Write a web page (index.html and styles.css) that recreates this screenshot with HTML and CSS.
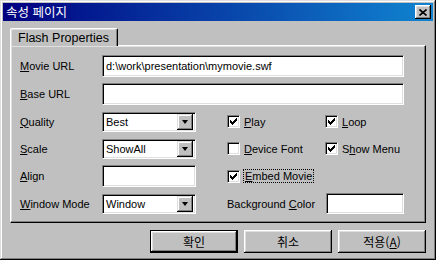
FILE: index.html
```html
<!DOCTYPE html>
<html lang="ko">
<head>
<meta charset="UTF-8" />
<title>속성 페이지</title>
<link rel="stylesheet" href="styles.css">
</head>
<body>

<div class="window">
  <div class="titlebar">
    <span class="title">속성 페이지</span>
    <button class="close-btn" type="button">
      <svg width="8" height="7" viewBox="0 0 8 7"><path d="M0.5 0.5L7.5 6.5M7.5 0.5L0.5 6.5" stroke="#000" stroke-width="1.6" fill="none"/></svg>
    </button>
  </div>

  <div class="content">
    <div class="tabs">
      <div class="tab">Flash Properties</div>
    </div>

    <div class="panel">
      <label class="lbl r1"><u>M</u>ovie URL</label>
      <div class="field wide r1">d:\work\presentation\mymovie.swf</div>

      <label class="lbl r2"><u>B</u>ase URL</label>
      <div class="field wide r2"></div>

      <label class="lbl r3"><u>Q</u>uality</label>
      <div class="combo r3"><span>Best</span><i class="arrow"></i></div>
      <div class="check c1 r3"><span class="box on"></span><span><u>P</u>lay</span></div>
      <div class="check c2 r3"><span class="box on"></span><span><u>L</u>oop</span></div>

      <label class="lbl r4"><u>S</u>cale</label>
      <div class="combo r4"><span>ShowAll</span><i class="arrow"></i></div>
      <div class="check c1 r4"><span class="box"></span><span><u>D</u>evice Font</span></div>
      <div class="check c2 r4"><span class="box on"></span><span>S<u>h</u>ow Menu</span></div>

      <label class="lbl r5"><u>A</u>lign</label>
      <div class="field small r5"></div>
      <div class="check c1 r5"><span class="box on"></span><span class="focus"><u>E</u>mbed Movie</span></div>

      <label class="lbl r6"><u>W</u>indow Mode</label>
      <div class="combo r6"><span>Window</span><i class="arrow"></i></div>
      <label class="lbl c1 r6">Background <u>C</u>olor</label>
      <div class="field color c2 r6"></div>
    </div>

    <div class="buttons">
      <button class="btn default" type="button">확인</button>
      <button class="btn" type="button">취소</button>
      <button class="btn" type="button">적용(<u>A</u>)</button>
    </div>
  </div>
</div>

</body>
</html>
```

FILE: styles.css
```css
body {
  margin: 0;
  background: #c0c0c0;
  font-family: "Liberation Sans", Arial, sans-serif;
  font-size: 11px;
  color: #000;
}

.window {
  width: 436px;
  height: 260px;
  box-sizing: border-box;
  padding: 3px;
  background: #c0c0c0;
  box-shadow: inset -1px -1px #000, inset 1px 1px #dfdfdf, inset -2px -2px #808080, inset 2px 2px #fff;
}

.titlebar {
  height: 18px;
  display: flex;
  align-items: center;
  justify-content: space-between;
  padding: 0 2px 0 3px;
  background: linear-gradient(to right, #000080, #1084d0);
}

.title {
  color: #fff;
  font-family: "Noto Sans CJK KR", sans-serif;
  font-size: 12.5px;
  line-height: 18px;
}

.close-btn {
  width: 16px;
  height: 14px;
  padding: 0;
  border: none;
  background: #c0c0c0;
  display: flex;
  align-items: center;
  justify-content: center;
  box-shadow: inset -1px -1px #000, inset 1px 1px #fff, inset -2px -2px #808080, inset 2px 2px #dfdfdf;
}

.content {
  padding: 0 7px;
}

.tabs {
  display: flex;
  margin-top: 7px;
  height: 17px;
}

.tab {
  width: 108px;
  height: 18px;
  box-sizing: border-box;
  padding: 1px 0 0 7px;
  font-size: 12.5px;
  line-height: 16px;
  background: #c0c0c0;
  border-left: 1px solid #fff;
  border-top: 1px solid #fff;
  border-right: 1px solid #000;
  border-top-left-radius: 2px;
  border-top-right-radius: 2px;
  box-shadow: inset -1px 0 #808080, inset 1px 1px #dfdfdf;
  position: relative;
  z-index: 1;
}

.panel {
  height: 178px;
  box-sizing: border-box;
  padding: 9px 0 0 9px;
  border: 1px solid;
  border-color: #fff #000 #000 #fff;
  box-shadow: inset -1px -1px #808080, inset 1px 1px #dfdfdf;
  display: grid;
  grid-template-columns: 82px 94px 31px 98px 79px;
  grid-template-rows: 22px 22px 21px 21px 22px 21px;
  row-gap: 6px;
  align-items: center;
}

.r1 { grid-row: 1; }
.r2 { grid-row: 2; }
.r3 { grid-row: 3; }
.r4 { grid-row: 4; }
.r5 { grid-row: 5; }
.r6 { grid-row: 6; }
.lbl { grid-column: 1; }
.c1 { grid-column: 4; }
.c2 { grid-column: 5; }

.field,
.combo {
  height: 21px;
  box-sizing: border-box;
  background: #fff;
  border: 1px solid;
  border-color: #808080 #fff #fff #808080;
  box-shadow: inset 1px 1px #000, inset -1px -1px #dfdfdf;
  padding: 0 3px;
  line-height: 19px;
  white-space: nowrap;
  overflow: hidden;
}

.wide {
  grid-column: 2 / 6;
  height: 22px;
  line-height: 20px;
}

.small {
  grid-column: 2;
  height: 22px;
}

.color {
  height: 21px;
  margin-left: 1px;
}

.combo {
  grid-column: 2;
  height: 20px;
  display: flex;
  justify-content: space-between;
  align-items: center;
  padding: 0 2px 0 3px;
  line-height: 16px;
}

.arrow {
  width: 16px;
  height: 16px;
  box-sizing: border-box;
  background: #c0c0c0;
  box-shadow: inset -1px -1px #000, inset 1px 1px #dfdfdf, inset -2px -2px #808080, inset 2px 2px #fff;
  display: flex;
  align-items: center;
  justify-content: center;
}

.arrow::after {
  content: "";
  border-left: 3.5px solid transparent;
  border-right: 3.5px solid transparent;
  border-top: 4px solid #000;
}

.check {
  display: flex;
  align-items: center;
  gap: 4px;
}

.box {
  width: 13px;
  height: 13px;
  box-sizing: border-box;
  background: #fff;
  border: 1px solid;
  border-color: #808080 #fff #fff #808080;
  box-shadow: inset 1px 1px #000, inset -1px -1px #dfdfdf;
}

.box.on {
  background: #fff url("data:image/svg+xml,%3Csvg xmlns='http://www.w3.org/2000/svg' width='7' height='7'%3E%3Cpath d='M0 2h1v1h1v1h1V3h1V2h1V1h1V0h1v3H6v1H5v1H4v1H3v1H2V6H1V5H0z' fill='%23000'/%3E%3C/svg%3E") no-repeat 2px 2px;
}

.focus {
  outline: 1px dotted #000;
  outline-offset: 0;
  padding: 0 1px;
}

.buttons {
  display: flex;
  justify-content: flex-end;
  gap: 6px;
  margin-top: 7px;
}

.btn {
  width: 88px;
  height: 23px;
  padding: 0;
  border: none;
  background: #c0c0c0;
  font-family: "Noto Sans CJK KR", sans-serif;
  font-size: 12px;
  color: #000;
  box-shadow: inset -1px -1px #000, inset 1px 1px #fff, inset -2px -2px #808080, inset 2px 2px #dfdfdf;
}

.btn.default {
  box-shadow: inset 0 0 0 1px #000, inset -2px -2px #000, inset 2px 2px #fff, inset -3px -3px #808080, inset 3px 3px #dfdfdf;
}
```
